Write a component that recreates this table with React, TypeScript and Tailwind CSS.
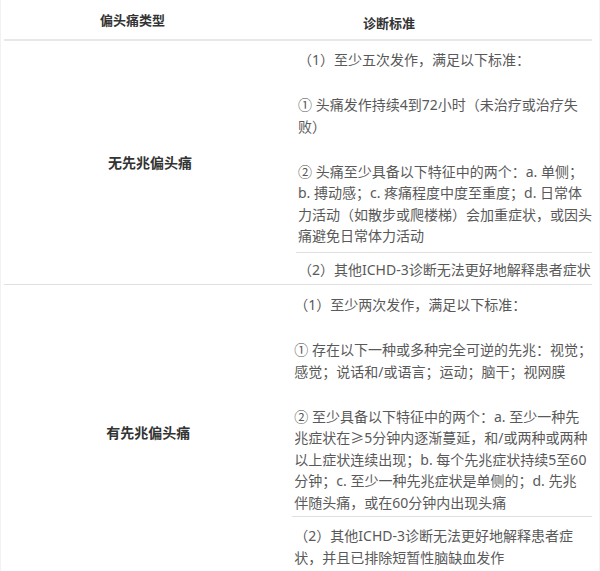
const font = { fontFamily: '"Noto Sans", "Noto Sans CJK SC", sans-serif' };

function Lines({ lines }: { lines: string[] }) {
  return (
    <div>
      {lines.map((l, i) => (
        <div key={i} className="whitespace-nowrap">
          {l}
        </div>
      ))}
    </div>
  );
}

function Blank() {
  return <div className="h-[23.5px]" />;
}

export default function App() {
  return (
    <div
      className="w-[600px] min-h-[571px] bg-white border-x border-[#f2f2f2] pl-[3px] pr-[7px] text-[14px] leading-[21.5px] text-[#595959]"
      style={font}
    >
      {/* header */}
      <div className="flex h-[41px] border-b-2 border-[#e8e8e8] font-bold text-[13px] text-[#333]">
        <div className="w-[294px] pl-[96px] pt-[10px]">偏头痛类型</div>
        <div className="pl-[65px] pt-[13px]">诊断标准</div>
      </div>

      {/* 无先兆偏头痛 */}
      <div className="flex border-b border-[#e0e0e0]">
        <div className="w-[294px] flex items-center justify-center font-bold text-[#333]">
          无先兆偏头痛
        </div>
        <div className="flex-1">
          <div className="pl-[2px] pt-[8px] pb-[5px] border-b border-[#e0e0e0]">
            <Lines lines={['（1）至少五次发作，满足以下标准：']} />
            <Blank />
            <Lines lines={['① 头痛发作持续4到72小时（未治疗或治疗失', '败）']} />
            <Blank />
            <Lines
              lines={[
                '② 头痛至少具备以下特征中的两个：a. 单侧；',
                'b. 搏动感；c. 疼痛程度中度至重度；d. 日常体',
                '力活动（如散步或爬楼梯）会加重症状，或因头',
                '痛避免日常体力活动',
              ]}
            />
          </div>
          <div className="pl-[2px] pt-[6px] pb-[4px]">
            <Lines lines={['（2）其他ICHD-3诊断无法更好地解释患者症状']} />
          </div>
        </div>
      </div>

      {/* 有先兆偏头痛 */}
      <div className="flex border-b border-[#e0e0e0]">
        <div className="w-[294px] flex items-center justify-center font-bold text-[#333]">
          有先兆偏头痛
        </div>
        <div className="flex-1">
          <div className="pl-[2px] pt-[9px] pb-[3px] border-b border-[#e0e0e0]">
            <Lines lines={['（1）至少两次发作，满足以下标准：']} />
            <Blank />
            <Lines
              lines={[
                '① 存在以下一种或多种完全可逆的先兆：视觉；',
                '感觉；说话和/或语言；运动；脑干；视网膜',
              ]}
            />
            <Blank />
            <Lines
              lines={[
                '② 至少具备以下特征中的两个：a. 至少一种先',
                '兆症状在≥5分钟内逐渐蔓延，和/或两种或两种',
                '以上症状连续出现；b. 每个先兆症状持续5至60',
                '分钟；c. 至少一种先兆症状是单侧的；d. 先兆',
                '伴随头痛，或在60分钟内出现头痛',
              ]}
            />
          </div>
          <div className="pl-[2px] pt-[8px] pb-[12px]">
            <Lines lines={['（2）其他ICHD-3诊断无法更好地解释患者症', '状，并且已排除短暂性脑缺血发作']} />
          </div>
        </div>
      </div>
    </div>
  );
}
